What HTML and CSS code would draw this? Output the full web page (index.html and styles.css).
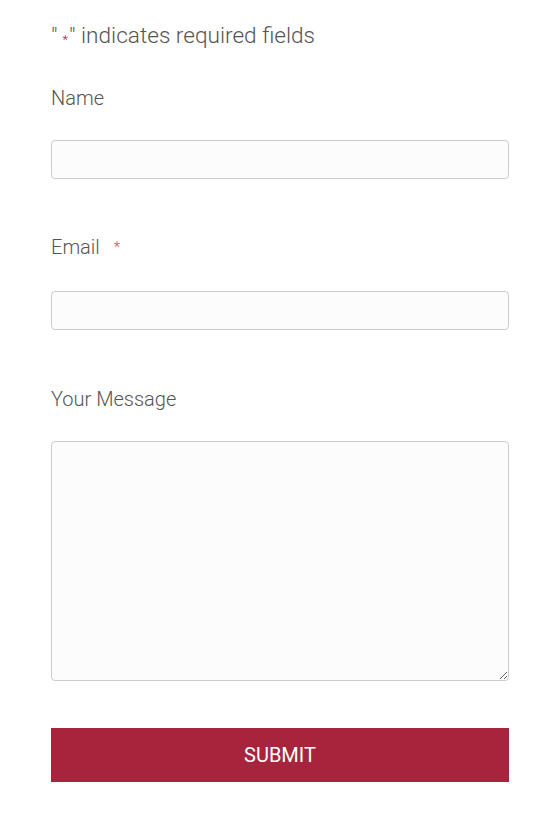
FILE: index.html
```html
<!DOCTYPE html>
<html lang="en">
<head>
<meta charset="utf-8">
<title>Contact</title>
<link rel="stylesheet" href="styles.css">
</head>
<body>
  <form class="contact-form">
    <p class="required-note">"<span class="req-mark">*</span>" indicates required fields</p>

    <div class="field">
      <label class="field-label" for="name">Name</label>
      <input class="text-input" id="name" type="text">
    </div>

    <div class="field field-wide">
      <label class="field-label" for="email">Email<span class="req-star">*</span></label>
      <input class="text-input" id="email" type="email">
    </div>

    <div class="field field-last">
      <label class="field-label" for="message">Your Message</label>
      <textarea class="text-area" id="message"></textarea>
    </div>

    <button class="submit-btn" type="button">SUBMIT</button>
  </form>
</body>
</html>
```

FILE: styles.css
```css
html, body {
  margin: 0;
  padding: 0;
  background: #ffffff;
}

body {
  font-family: Roboto, "Liberation Sans", sans-serif;
  color: #555555;
}

.contact-form {
  width: 458px;
  padding: 22px 0 0 51px;
  display: flex;
  flex-direction: column;
}

.required-note {
  margin: 0 0 33px;
  font-size: 22.6px;
  line-height: 28px;
  font-weight: 300;
  color: #555555;
}

.req-mark {
  color: #a8243c;
  font-size: 13px;
  position: relative;
  top: 1px;
  margin: 0 1px 0 5px;
}

.field {
  display: flex;
  flex-direction: column;
  margin-bottom: 56px;
}

.field-wide {
  margin-bottom: 57px;
}

.field-label {
  font-size: 20px;
  line-height: 24px;
  font-weight: 300;
  color: #555555;
  margin-bottom: 30px;
}

.req-star {
  color: #b5533f;
  font-size: 15px;
  margin-left: 14px;
  position: relative;
  top: -2px;
}

.text-input,
.text-area {
  box-sizing: border-box;
  width: 458px;
  border: 1px solid #cccccc;
  border-radius: 4px;
  background: #fcfcfc;
  margin: 0;
  font: inherit;
}

.text-input {
  height: 39px;
}

.text-area {
  height: 240px;
  resize: vertical;
  display: block;
}

.field-last {
  margin-bottom: 47px;
}

.submit-btn {
  width: 458px;
  height: 54px;
  border: none;
  border-radius: 0;
  background: #a8243c;
  color: #ffffff;
  font-family: Roboto, "Liberation Sans", sans-serif;
  font-size: 20px;
  font-weight: 400;
  padding: 0;
  cursor: pointer;
}
```
